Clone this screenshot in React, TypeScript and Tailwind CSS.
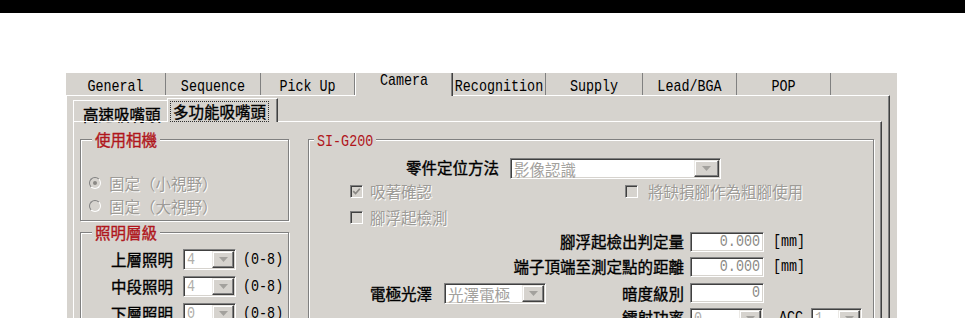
import React from "react";

const cjk = "font-['Noto_Sans_CJK_TC','Noto_Sans_CJK_JP',sans-serif]";
const mono = "font-['Liberation_Mono','DejaVu_Sans_Mono',monospace]";

type P = { children?: React.ReactNode; className?: string };

function Mono({ children, className = "" }: P) {
  return (
    <span className={`inline-block ${mono} text-[13.4px] leading-[14px] scale-y-[1.3] whitespace-pre ${className}`}>
      {children}
    </span>
  );
}

function Label({ children, className = "" }: P) {
  return (
    <span
      className={`${cjk} text-[15.5px] leading-[18px] text-black font-normal [-webkit-text-stroke:0.35px_#000000] whitespace-nowrap ${className}`}
    >
      {children}
    </span>
  );
}

function Dis({ children, className = "" }: P) {
  return (
    <span
      className={`${cjk} text-[15.5px] leading-[18px] text-[#9d9b97] [text-shadow:1px_1px_0_#ffffff] whitespace-nowrap ${className}`}
    >
      {children}
    </span>
  );
}

function Arrow() {
  return (
    <svg width="9" height="5" viewBox="0 0 9 5">
      <path d="M0 0H9L4.5 5Z" fill="#a3a19d" />
    </svg>
  );
}

function DropBtn({ w }: { w: string }) {
  return (
    <div
      className={`${w} h-full flex items-center justify-center bg-[#d6d3ce] border border-t-[#ebe9e5] border-l-[#ebe9e5] border-b-[#404040] border-r-[#404040] shadow-[inset_-1px_-1px_0_#808080,inset_1px_1px_0_#ffffff]`}
    >
      <Arrow />
    </div>
  );
}

function Combo({ w, btn = "w-[22px]", children }: { w: string; btn?: string; children?: React.ReactNode }) {
  return (
    <div
      className={`${w} h-[21px] flex bg-white border border-t-[#808080] border-l-[#808080] border-b-white border-r-white shadow-[inset_1px_1px_0_#404040,inset_-1px_-1px_0_#d6d3ce]`}
    >
      <div className="flex-1 flex items-center pl-[3px] pt-[1px] overflow-hidden">{children}</div>
      <div className="pt-[1px] pb-[1px] pr-[1px] h-full">
        <DropBtn w={btn} />
      </div>
    </div>
  );
}

function Input({ w, children }: { w: string; children?: React.ReactNode }) {
  return (
    <div
      className={`${w} h-[20px] flex items-center justify-end pr-[3px] bg-white border border-t-[#808080] border-l-[#808080] border-b-white border-r-white shadow-[inset_1px_1px_0_#404040,inset_-1px_-1px_0_#d6d3ce]`}
    >
      {children}
    </div>
  );
}

function Check({ checked = false }: { checked?: boolean }) {
  return (
    <span className="inline-flex shrink-0 w-[13px] h-[13px] items-center justify-center bg-[#d6d3ce] border border-t-[#808080] border-l-[#808080] border-b-white border-r-white shadow-[inset_1px_1px_0_#404040,inset_-1px_-1px_0_#d6d3ce]">
      {checked && (
        <svg width="9" height="9" viewBox="0 0 9 9">
          <path d="M1.2 4.2 L3.6 6.6 L7.8 1.8" stroke="#8a8884" strokeWidth="1.7" fill="none" />
        </svg>
      )}
    </span>
  );
}

function Radio({ checked = false }: { checked?: boolean }) {
  return (
    <span className="inline-flex shrink-0 w-[12px] h-[12px] rounded-full items-center justify-center bg-[#d6d3ce] border border-t-[#808080] border-l-[#808080] border-b-white border-r-white">
      {checked && <span className="w-[4px] h-[4px] rounded-full bg-[#8a8884]" />}
    </span>
  );
}

const fieldset =
  "border border-[#808080] shadow-[inset_1px_1px_0_#ffffff,1px_1px_0_#ffffff] min-w-0";
const legendCls = `bg-[#d6d3ce] px-[3px] leading-[16px] h-[16px] text-[#b0161c] ${cjk} text-[15.5px] font-normal [-webkit-text-stroke:0.35px_#b0161c]`;

const tabs: { label: string; w: string; sel?: boolean }[] = [
  { label: "General", w: "w-[100px]" },
  { label: "Sequence", w: "w-[95px]" },
  { label: "Pick Up", w: "w-[94px]" },
  { label: "Camera", w: "w-[98px]", sel: true },
  { label: "Recognition", w: "w-[93px]" },
  { label: "Supply", w: "w-[97px]" },
  { label: "Lead/BGA", w: "w-[94px]" },
  { label: "POP", w: "w-[94px]" },
];

export default function App() {
  return (
    <div className="w-[965px] h-[318px] overflow-hidden bg-white">
      <div className="h-[13px] bg-black" />
      <div className="h-[60px]" />
      <div className="ml-[66px] w-[831px] h-[245px] bg-[#d6d3ce] flex flex-col">
        {/* main tab strip */}
        <div className="flex h-[22px] shrink-0 items-start">
          {tabs.map((t) =>
            t.sel ? (
              <div
                key={t.label}
                className={`${t.w} h-[23px] relative z-10 bg-[#d6d3ce] border-l border-l-white border-r border-r-[#404040] shadow-[inset_-1px_0_0_#808080] flex justify-center pt-[2px]`}
              >
                <Mono className="text-black">{t.label}</Mono>
              </div>
            ) : (
              <div
                key={t.label}
                className={`${t.w} h-full border-r border-r-[#808080] flex justify-center pt-[7px]`}
              >
                <Mono className="text-black">{t.label}</Mono>
              </div>
            )
          )}
        </div>

        {/* main panel */}
        <div className="w-[824px] flex-1 flex flex-col border-t border-t-white border-l border-l-white border-r border-r-[#404040] shadow-[inset_-1px_0_0_#808080]">
          {/* sub tabs */}
          <div className="h-[25px] shrink-0 flex items-end">
            <div className="ml-[6px] w-[94px] h-[21px] border-t border-t-white border-l border-l-white pl-[9px] pt-[2px]">
              <Label>高速吸嘴頭</Label>
            </div>
            <div className="w-[111px] h-[24px] -mb-px relative z-10 bg-[#d6d3ce] border-t border-t-white border-l border-l-white border-r border-r-[#404040] shadow-[inset_-1px_0_0_#808080] pl-[2px] pt-[1px]">
              <span className="inline-block border border-dotted border-[#303030] px-[2px] leading-[18px]">
                <Label>多功能吸嘴頭</Label>
              </span>
            </div>
          </div>

          {/* sub panel */}
          <div className="ml-[6px] w-[809px] flex-1 border-t border-t-white border-l border-l-white border-r border-r-[#404040] shadow-[inset_-1px_0_0_#808080] pt-[9px] pl-[6px] flex items-start">
            {/* left column */}
            <div className="w-[209px] flex flex-col shrink-0">
              <fieldset className={`${fieldset} pt-[24px] pb-[3px]`}>
                <legend className={`${legendCls} ml-[11px]`}>使用相機</legend>
                <div className="h-[23px] flex items-center pl-[8px]">
                  <Radio checked />
                  <Dis className="ml-[8px]">固定（小視野）</Dis>
                </div>
                <div className="h-[23px] flex items-center pl-[8px]">
                  <Radio />
                  <Dis className="ml-[8px]">固定（大視野）</Dis>
                </div>
              </fieldset>
              <fieldset className={`${fieldset} mt-[3px] pt-[6px] pb-[4px]`}>
                <legend className={`${legendCls} ml-[11px]`}>照明層級</legend>
                {[
                  ["上層照明", "4"],
                  ["中段照明", "4"],
                  ["下層照明", "0"],
                ].map(([l, v]) => (
                  <div key={l} className="h-[27px] flex items-center">
                    <div className="w-[92px] text-right">
                      <Label>{l}</Label>
                    </div>
                    <div className="ml-[10px]">
                      <Combo w="w-[53px]">
                        <Mono className="text-[#b0aeaa]">{v}</Mono>
                      </Combo>
                    </div>
                    <Mono className="ml-[7px] text-black">(0-8)</Mono>
                  </div>
                ))}
              </fieldset>
            </div>

            {/* SI-G200 */}
            <fieldset className={`${fieldset} ml-[19px] w-[566px] shrink-0 pt-[10px] pb-[4px]`}>
              <legend className={`bg-[#d6d3ce] px-[3px] leading-[16px] h-[16px] ml-[5px] text-[#b0161c]`}>
                <Mono>SI-G200</Mono>
              </legend>

              <div className="h-[22px] flex items-center">
                <div className="w-[190px] text-right">
                  <Label>零件定位方法</Label>
                </div>
                <div className="ml-[11px]">
                  <Combo w="w-[211px]" btn="w-[25px]">
                    <Dis className="[text-shadow:none] text-[#a3a19d]">影像認識</Dis>
                  </Combo>
                </div>
              </div>

              <div className="h-[24px] flex items-center">
                <div className="ml-[41px] w-[275px] flex items-center">
                  <Check checked />
                  <Dis className="ml-[7px]">吸著確認</Dis>
                </div>
                <Check />
                <Dis className="ml-[10px]">將缺損腳作為粗腳使用</Dis>
              </div>

              <div className="h-[28px] flex items-center">
                <div className="ml-[41px] flex items-center">
                  <Check />
                  <Dis className="ml-[7px]">腳浮起檢測</Dis>
                </div>
              </div>

              <div className="h-[22px] flex items-center">
                <div className="w-[375px] text-right">
                  <Label>腳浮起檢出判定量</Label>
                </div>
                <div className="ml-[6px]">
                  <Input w="w-[74px]">
                    <Mono className="text-[#8c8a86]">0.000</Mono>
                  </Input>
                </div>
                <Mono className="ml-[9px] text-black">[mm]</Mono>
              </div>

              <div className="h-[28px] flex items-center">
                <div className="w-[375px] text-right">
                  <Label>端子頂端至測定點的距離</Label>
                </div>
                <div className="ml-[6px]">
                  <Input w="w-[74px]">
                    <Mono className="text-[#8c8a86]">0.000</Mono>
                  </Input>
                </div>
                <Mono className="ml-[9px] text-black">[mm]</Mono>
              </div>

              <div className="h-[24px] flex items-center">
                <div className="w-[375px] flex items-center">
                  <Label className="ml-[61px]">電極光澤</Label>
                  <div className="ml-[12px]">
                    <Combo w="w-[102px]">
                      <Dis className="[text-shadow:none] text-[#a3a19d]">光澤電極</Dis>
                    </Combo>
                  </div>
                  <Label className="ml-auto">暗度級別</Label>
                </div>
                <div className="ml-[6px]">
                  <Input w="w-[74px]">
                    <Mono className="text-[#8c8a86]">0</Mono>
                  </Input>
                </div>
              </div>

              <div className="h-[26px] flex items-center">
                <div className="w-[375px] text-right">
                  <Label>鐳射功率</Label>
                </div>
                <div className="ml-[6px]">
                  <Combo w="w-[73px]">
                    <Mono className="text-[#b0aeaa]">0</Mono>
                  </Combo>
                </div>
                <Mono className="ml-[16px] text-black">ACC</Mono>
                <div className="ml-[8px]">
                  <Combo w="w-[51px]">
                    <Mono className="text-[#b0aeaa]">1</Mono>
                  </Combo>
                </div>
              </div>
            </fieldset>
          </div>
        </div>
      </div>
    </div>
  );
}
